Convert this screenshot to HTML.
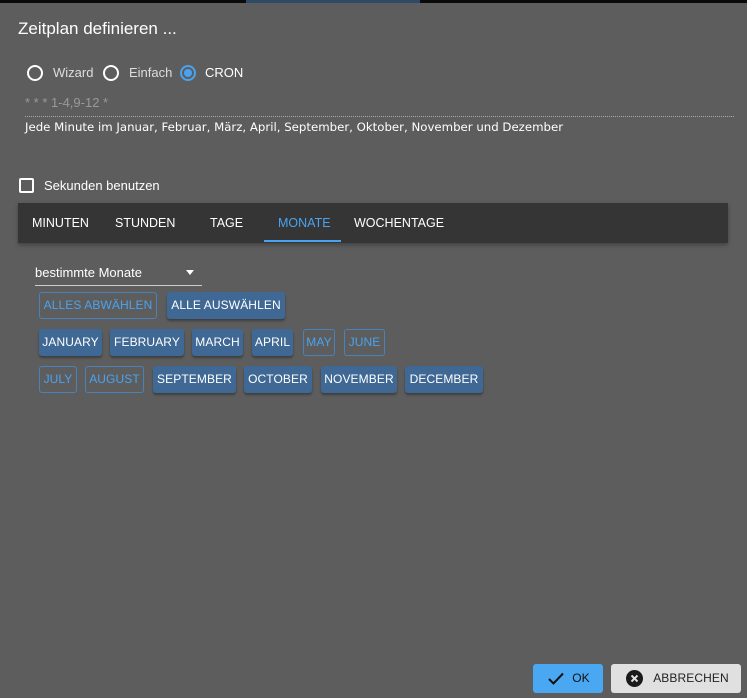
<!DOCTYPE html>
<html><head><meta charset="utf-8"><style>
*{box-sizing:border-box;margin:0;padding:0}
body{width:747px;height:698px;background:#5d5d5d;font-family:"Liberation Sans",sans-serif;color:#fff;position:relative;overflow:hidden}
.a{position:absolute}
.top{left:0;top:0;width:747px;height:3px;background:#0a0a0a}
.topb{left:246px;top:0;width:174px;height:3px;background:#2f4a66}
.radio{width:16px;height:16px;border:2px solid #fff;border-radius:50%}
.lbl{font-size:13px;color:#ddd}
.b{position:absolute;height:27px;font-size:12px;line-height:27px;text-align:center;border-radius:3px;letter-spacing:0.1px}
.f{background:#3f6894;color:#fff;box-shadow:0 2px 2px rgba(0,0,0,.35)}
.o{border:1px solid #4a82b8;color:#4aa3f0;line-height:25px}
.tab{position:absolute;top:203px;height:40px;line-height:40px;font-size:12.5px;color:#fff}
</style></head><body>
<div class="a top"></div><div class="a topb"></div>
<div class="a" style="left:18px;top:19px;font-size:17px">Zeitplan definieren ...</div>
<div class="a radio" style="left:27px;top:65px"></div>
<div class="a lbl" style="left:53px;top:65px">Wizard</div>
<div class="a radio" style="left:103px;top:65px"></div>
<div class="a lbl" style="left:129px;top:65px">Einfach</div>
<div class="a radio" style="left:180px;top:65px;border-color:#4aa3f0"><div style="position:absolute;left:2px;top:2px;width:8px;height:8px;border-radius:50%;background:#4aa3f0"></div></div>
<div class="a" style="left:205px;top:65px;font-size:13px">CRON</div>
<div class="a" style="left:25px;top:95px;font-size:13px;color:#999">* * * 1-4,9-12 *</div>
<div class="a" style="left:25px;top:116px;width:709px;border-top:1px dotted #aaa"></div>
<div class="a" style="left:25px;top:120px;font-family:'DejaVu Sans',sans-serif;font-size:11.75px">Jede Minute im Januar, Februar, März, April, September, Oktober, November und Dezember</div>
<div class="a" style="left:19px;top:178px;width:15px;height:15px;border:2px solid #fff;border-radius:2px"></div>
<div class="a" style="left:44px;top:178px;font-size:13px">Sekunden benutzen</div>
<div class="a" style="left:18px;top:203px;width:710px;height:40px;background:#353535;box-shadow:0 2px 4px rgba(0,0,0,.3)"></div>
<div class="tab" style="left:32px">MINUTEN</div>
<div class="tab" style="left:115px">STUNDEN</div>
<div class="tab" style="left:210px">TAGE</div>
<div class="tab" style="left:278px;color:#4aa3f0">MONATE</div>
<div class="tab" style="left:354px">WOCHENTAGE</div>
<div class="a" style="left:264px;top:240px;width:77px;height:2px;background:#4aa3f0"></div>
<div class="a" style="left:35px;top:265px;font-size:13px">bestimmte Monate</div>
<div class="a" style="left:186px;top:270px;width:0;height:0;border-left:4px solid transparent;border-right:4px solid transparent;border-top:5px solid #fff"></div>
<div class="a" style="left:35px;top:285px;width:167px;height:1px;background:#ccc"></div>
<div class="b o" style="left:39px;top:292px;width:118px">ALLES ABWÄHLEN</div>
<div class="b f" style="left:167px;top:292px;width:118px">ALLE AUSWÄHLEN</div>
<div class="b f" style="left:39px;top:329px;width:63px">JANUARY</div>
<div class="b f" style="left:110px;top:329px;width:74px">FEBRUARY</div>
<div class="b f" style="left:192px;top:329px;width:51px">MARCH</div>
<div class="b f" style="left:252px;top:329px;width:41px">APRIL</div>
<div class="b o" style="left:303px;top:329px;width:32px">MAY</div>
<div class="b o" style="left:344px;top:329px;width:41px">JUNE</div>
<div class="b o" style="left:39px;top:366px;width:38px">JULY</div>
<div class="b o" style="left:85px;top:366px;width:59px">AUGUST</div>
<div class="b f" style="left:153px;top:366px;width:83px">SEPTEMBER</div>
<div class="b f" style="left:244px;top:366px;width:68px">OCTOBER</div>
<div class="b f" style="left:321px;top:366px;width:76px">NOVEMBER</div>
<div class="b f" style="left:405px;top:366px;width:78px">DECEMBER</div>
<div class="b" style="left:533px;top:664px;width:70px;height:29px;background:#4aa8f2;color:#111;line-height:29px">
<svg style="position:absolute;left:15px;top:8px" width="16" height="13" viewBox="0 0 16 13"><path d="M1 7 L5.5 11.5 L15 1.5" stroke="#111" stroke-width="2" fill="none"/></svg><span style="margin-left:26px">OK</span></div>
<div class="b" style="left:611px;top:664px;width:130px;height:29px;background:#e0e0e0;color:#222;line-height:29px">
<svg style="position:absolute;left:15px;top:6px" width="17" height="17" viewBox="0 0 17 17"><circle cx="8.5" cy="8.5" r="8.5" fill="#1a1a1a"/><path d="M5.5 5.5 L11.5 11.5 M11.5 5.5 L5.5 11.5" stroke="#e0e0e0" stroke-width="2"/></svg><span style="margin-left:30px">ABBRECHEN</span></div>
</body></html>
